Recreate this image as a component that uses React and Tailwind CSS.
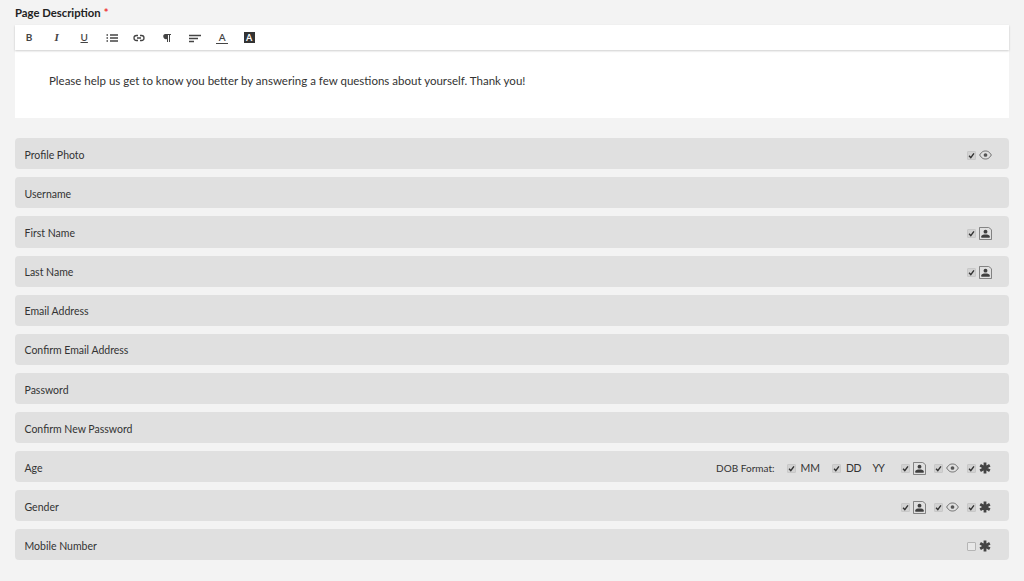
import React from "react";

function Check({ on = true }) {
  return (
    <span className={`flex h-[9px] w-[9px] items-center justify-center rounded-[1px] border ${on ? "border-[#c8c8c8] bg-[#d2d2d2]" : "border-[#b5b5b5] bg-[#e8e8e8]"}`}>
      {on && (
        <svg viewBox="0 0 10 10" className="h-[7px] w-[7px]">
          <path d="M1.5 5.5 L4 8 L8.5 2" fill="none" stroke="#333" strokeWidth="2" />
        </svg>
      )}
    </span>
  );
}

function Contact() {
  return (
    <svg viewBox="0 0 14 14" className="h-[13px] w-[13px]">
      <path d="M.5 .5 H10.5 L13.5 3 V13.5 H.5 Z" fill="none" stroke="#777" />
      <circle cx="7" cy="5" r="2.1" fill="#3f3f3f" />
      <path d="M2.5 11.5 V10 C2.5 8.5 4.5 8 7 8 C9.5 8 11.5 8.5 11.5 10 V11.5 Z" fill="#3f3f3f" />
    </svg>
  );
}

function Eye() {
  return (
    <svg viewBox="0 0 14 10" className="h-[10px] w-[13px]">
      <path d="M.7 5 C3 1.2 5 .7 7 .7 C9 .7 11 1.2 13.3 5 C11 8.8 9 9.3 7 9.3 C5 9.3 3 8.8 .7 5 Z" fill="none" stroke="#666" strokeWidth="1" />
      <circle cx="7" cy="5" r="2" fill="#555" />
    </svg>
  );
}

function Star() {
  return (
    <svg viewBox="0 0 12 12" className="mr-[1px] h-[12px] w-[12px]">
      <path d="M6 .5 V11.5 M1.2 3.2 L10.8 8.8 M10.8 3.2 L1.2 8.8" fill="none" stroke="#444" strokeWidth="2.8" />
    </svg>
  );
}

function Opt({ icon, on }) {
  return (
    <span className="flex items-center gap-[3px]">
      <Check on={on} />
      {icon}
    </span>
  );
}

const rows = [
  { label: "Profile Photo", right: <Opt icon={<Eye />} /> },
  { label: "Username" },
  { label: "First Name", right: <Opt icon={<Contact />} /> },
  { label: "Last Name", right: <Opt icon={<Contact />} /> },
  { label: "Email Address" },
  { label: "Confirm Email Address" },
  { label: "Password" },
  { label: "Confirm New Password" },
  {
    label: "Age",
    right: (
      <div className="flex items-center">
        <span className="mr-[12px] text-[10px]">DOB Format:</span>
        <Check />
        <span className="mr-[12px] ml-[5px] pt-[1px] text-[10.5px]">MM</span>
        <Check />
        <span className="mr-[11.5px] ml-[5px] pt-[1px] text-[10.5px] tracking-[-0.5px]">DD</span>
        <span className="mr-[17px] pt-[1px] text-[10.5px] tracking-[-0.8px]">YY</span>
        <div className="flex items-center gap-[8px]">
          <Opt icon={<Contact />} />
          <Opt icon={<Eye />} />
          <Opt icon={<Star />} />
        </div>
      </div>
    ),
  },
  {
    label: "Gender",
    right: (
      <div className="flex items-center gap-[8px]">
        <Opt icon={<Contact />} />
        <Opt icon={<Eye />} />
        <Opt icon={<Star />} />
      </div>
    ),
  },
  { label: "Mobile Number", right: <Opt icon={<Star />} on={false} /> },
];

function ToolIcon({ children }) {
  return <svg viewBox="0 0 12 12" className="h-[12px] w-[12px]">{children}</svg>;
}

function Toolbar() {
  return (
    <div className="relative flex h-[25px] items-center gap-[15.6px] bg-white pl-[8px] text-[#444] shadow-[0_1px_2px_rgba(0,0,0,0.2)]">
      <span className="w-[12px] text-center text-[10px] font-bold">B</span>
      <span className="w-[12px] text-center font-['Liberation_Serif'] text-[11px] font-bold italic">I</span>
      <span className="w-[12px] text-center text-[10px] font-semibold underline">U</span>
      <ToolIcon>
        <path d="M4 3 H12 M4 6 H12 M4 9 H12" stroke="#444" strokeWidth="1.6" />
        <path d="M.5 3 H2 M.5 6 H2 M.5 9 H2" stroke="#444" strokeWidth="1.4" />
      </ToolIcon>
      <ToolIcon>
        <path d="M5 3.5 H3.5 a2.5 2.5 0 0 0 0 5 H5 M7 3.5 H8.5 a2.5 2.5 0 0 1 0 5 H7 M4 6 H8" fill="none" stroke="#444" strokeWidth="1.3" />
      </ToolIcon>
      <ToolIcon>
        <path d="M4 2 H10 V3 H9 V10 H8 V3 H7 V10 H6 V7 A2.5 2.5 0 0 1 4 2 Z" fill="#444" />
      </ToolIcon>
      <ToolIcon>
        <path d="M0 3.5 H12 M0 6.5 H9 M0 9.5 H5" stroke="#444" strokeWidth="1.5" />
      </ToolIcon>
      <span className="relative w-[12px] text-center text-[10px] leading-[10px] font-semibold">
        <span className="block border-b border-[#444] pb-[1px]">A</span>
      </span>
      <span className="flex h-[11px] w-[11px] items-center justify-center bg-[#333] text-[9px] leading-none font-bold text-white">A</span>
    </div>
  );
}

export default function App() {
  return (
    <div className="min-h-[581px] overflow-hidden bg-[#f3f3f3] px-[15px] font-['Lato',sans-serif] text-[11.5px] text-[#333]">
      <div className="flex h-[25px] items-center pt-[1px] text-[11.3px] font-bold text-[#222]">
        <span>Page Description</span>
        <span className="ml-[3px] text-[#e33]">*</span>
      </div>
      <Toolbar />
      <div className="h-[68px] bg-white pt-[23px] pl-[34px] leading-[16px]">
        Please help us get to know you better by answering a few questions about yourself. Thank you!
      </div>
      <div className="mt-[20.3px] flex flex-col gap-[8px]">
        {rows.map((row) => (
          <div key={row.label} className="flex h-[31.1px] items-center justify-between rounded-[4px] bg-[#e0e0e0] pt-[3px] pr-[17px] pl-[9.5px] text-[10.5px]">
            <span className="pt-[1px]">{row.label}</span>
            {row.right}
          </div>
        ))}
      </div>
    </div>
  );
}
